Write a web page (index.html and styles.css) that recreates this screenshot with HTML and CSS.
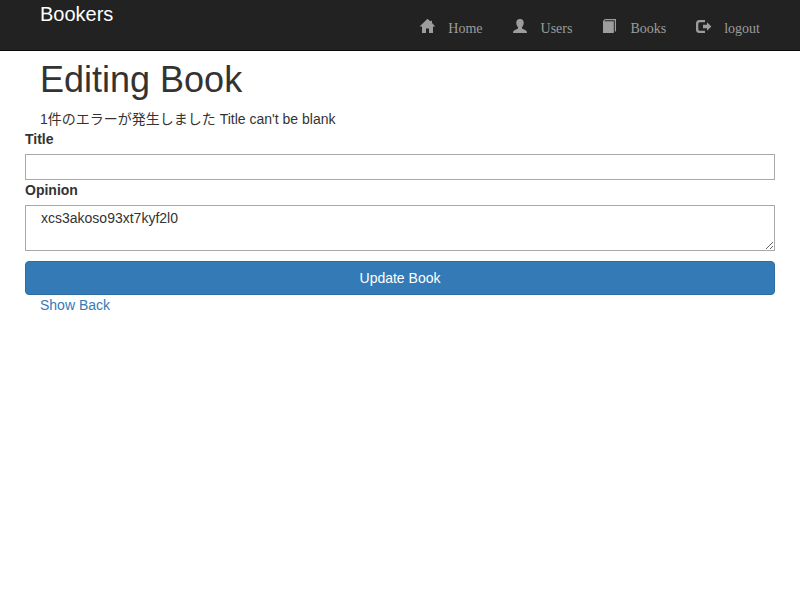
FILE: index.html
```html
<!DOCTYPE html>
<html lang="ja">
<head>
<meta charset="utf-8">
<title>Bookers</title>
<link rel="stylesheet" href="styles.css">
</head>
<body>
<header class="navbar">
  <a class="brand" href="#">Bookers</a>
  <nav class="menu">
    <a href="#"><svg class="icon" viewBox="0 0 14 14"><path d="M7.5 -.3L10.5 2.5V1.8H12V4L15.4 7.6H13V14H9V9.5H6V14H2V7.6H-.4Z"/></svg><span>Home</span></a>
    <a href="#"><svg class="icon" viewBox="0 0 14 14"><path d="M7 0C9.6 0 10.7 1.5 10.7 3.8C10.7 5.8 10 7.3 9 8.2V9.6L13 11.4Q14 12 14 14H0Q0 12 1 11.4L5 9.6V8.2C4 7.3 3.3 5.8 3.3 3.8C3.3 1.5 4.4 0 7 0Z"/></svg><span>Users</span></a>
    <a href="#"><svg class="icon" viewBox="0 0 14 14"><path d="M3 0H14V12L12.8 13V1.2H3.2L2.2 2.2H11.8V14H1V2Z"/></svg><span>Books</span></a>
    <a href="#"><svg class="icon" viewBox="0 0 14 14"><path d="M9 1H3.5Q0 1 0 4.5V10.5Q0 14 3.5 14H9V11.8H3.8Q2.3 11.8 2.3 10.3V4.7Q2.3 3.2 3.8 3.2H9ZM11 3.2L15.4 7.5L11 11.8V9.3H7V5.7H11Z"/></svg><span>logout</span></a>
  </nav>
</header>
<main class="container">
  <h1>Editing Book</h1>
  <div class="message">1件のエラーが発生しました Title can't be blank</div>
  <form class="form">
    <label for="title">Title</label>
    <input id="title" type="text">
    <label for="opinion">Opinion</label>
    <textarea id="opinion" rows="2">xcs3akoso93xt7kyf2l0</textarea>
    <button type="button">Update Book</button>
  </form>
  <div class="links"><a href="#">Show</a> <a href="#">Back</a></div>
</main>
</body>
</html>
```

FILE: styles.css
```css
* { box-sizing: border-box; }
body {
  margin: 0;
  font: 14px/20px "Liberation Sans", "Noto Sans CJK JP", sans-serif;
  color: #333;
  background: #fff;
}
a { color: #337ab7; text-decoration: none; }
.navbar {
  display: flex;
  justify-content: space-between;
  height: 51px;
  padding: 0 40px;
  background: #222;
  border-bottom: 1px solid #080808;
}
.brand { padding-top: 4px; font-size: 20px; color: #fff; }
.menu { display: flex; gap: 30px; padding-top: 19px; }
.menu a {
  display: flex;
  color: #9d9d9d;
  font-family: "Liberation Serif", serif;
}
.icon {
  width: 14px;
  height: 14px;
  margin-right: 14px;
  overflow: visible;
  fill: currentColor;
}
.container { padding: 0 25px; }
h1 { margin: 9px 15px 10px; font-size: 36px; line-height: 39px; font-weight: 400; }
.message, .links { padding: 0 15px; }
.form { display: flex; flex-direction: column; }
label { margin-bottom: 5px; font-weight: 700; }
input, textarea {
  display: block;
  width: 100%;
  margin: 0;
  padding: 2px 15px;
  border: 1px solid #a9a9a9;
  border-radius: 0;
  font: inherit;
  color: inherit;
  background: #fff;
}
input { height: 26px; }
textarea { height: 46px; resize: vertical; }
button {
  height: 34px;
  margin-top: 10px;
  padding: 6px 12px;
  border: 1px solid #2e6da4;
  border-radius: 4px;
  color: #fff;
  background: #337ab7;
  font: inherit;
}
```
